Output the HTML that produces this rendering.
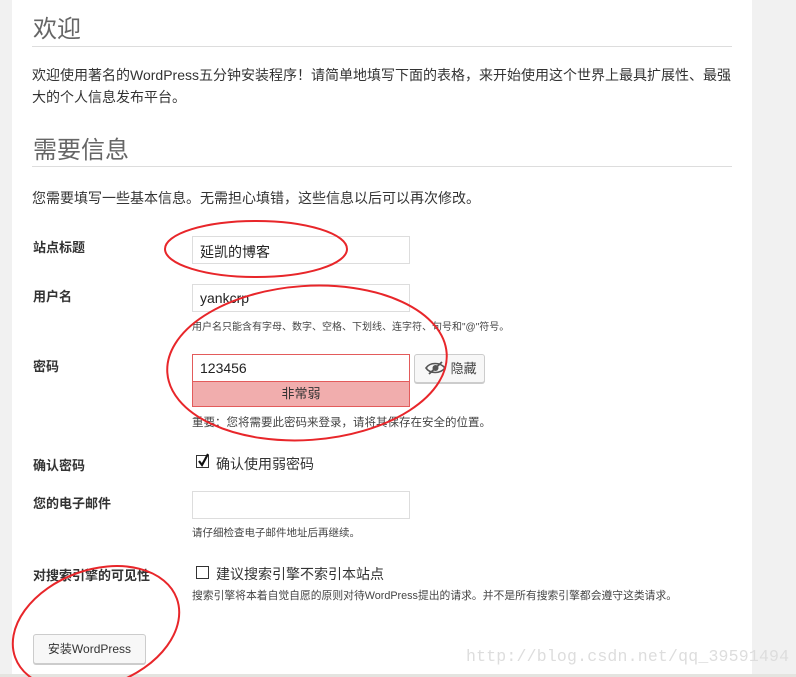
<!DOCTYPE html>
<html><head><meta charset="utf-8"><style>
*{margin:0;padding:0;box-sizing:border-box}
html,body{width:796px;height:677px;overflow:hidden}
body{background:#f1f1f1;position:relative;font-family:"Liberation Sans","Noto Sans CJK SC",sans-serif;color:#444;font-size:13px}
.panel{position:absolute;left:12px;top:0;width:740px;height:674px;background:#fff}
.bot{position:absolute;left:0;top:674px;width:796px;height:3px;background:#e4e4e0}
.a{position:absolute;white-space:nowrap}
h1{position:absolute;left:33px;font-weight:normal;font-size:24px;color:#666}
.hr{position:absolute;left:32px;width:700px;height:1px;background:#ddd}
.lab{position:absolute;left:33px;font-weight:bold;font-size:13px;color:#333}
.inp{position:absolute;left:192px;width:218px;height:28px;border:1px solid #ddd;background:#fff;font-size:14px;color:#222;padding:5px 7px}
.small{position:absolute;left:192px;font-size:11px;color:#444}
.cb{position:absolute;width:13px;height:13px;border:1px solid #333;background:#fff}
</style></head><body>
<div class="panel"></div>
<div class="bot"></div>
<h1 style="top:9px">欢迎</h1>
<div class="hr" style="top:46px"></div>
<div class="a" style="left:32px;top:64px;font-size:14px;line-height:22px;color:#333">欢迎使用著名的WordPress五分钟安装程序！请简单地填写下面的表格，来开始使用这个世界上最具扩展性、最强<br>大的个人信息发布平台。</div>
<h1 style="top:130px">需要信息</h1>
<div class="hr" style="top:166px"></div>
<div class="a" style="left:32px;top:188px;font-size:14px;color:#333">您需要填写一些基本信息。无需担心填错，这些信息以后可以再次修改。</div>

<div class="lab" style="top:237px">站点标题</div>
<div class="inp" style="top:236px">延凯的博客</div>
<div class="lab" style="top:286px">用户名</div>
<div class="inp" style="top:284px">yankcrp</div>
<div class="small" style="top:318px;font-size:10px">用户名只能含有字母、数字、空格、下划线、连字符、句号和"@"符号。</div>
<div class="lab" style="top:356px">密码</div>
<div class="inp" style="top:354px;border-color:#e35b5b;height:28px">123456</div>
<div class="a" style="left:192px;top:381px;width:218px;height:26px;background:#f1adad;border:1px solid #e35b5b;text-align:center;line-height:24px;font-size:13px;color:#333">非常弱</div>
<div class="a" style="left:414px;top:354px;width:71px;height:29px;background:#f7f7f7;border:1px solid #ccc;border-radius:3px;box-shadow:0 1px 0 #ccc;font-size:13px;line-height:27px;padding-left:10px">
<svg width="22" height="14" viewBox="0 0 22 14" style="vertical-align:-2px"><path d="M1 7C5 1 15 1 20 7C15 13 5 13 1 7Z" fill="none" stroke="#555" stroke-width="1.6"/><circle cx="10.5" cy="7" r="3" fill="#555"/><path d="M4 13L17 1" stroke="#555" stroke-width="1.8"/></svg> 隐藏</div>
<div class="small" style="top:414px;font-size:11.5px">重要：您将需要此密码来登录，请将其保存在安全的位置。</div>

<div class="lab" style="top:455px">确认密码</div>
<div class="cb" style="left:196px;top:455px"></div>
<svg class="a" style="left:196px;top:453px" width="14" height="15"><path d="M3 8L6 12L12 1" fill="none" stroke="#111" stroke-width="2.2"/></svg>
<div class="a" style="left:216px;top:454px;font-size:14px;color:#333">确认使用弱密码</div>
<div class="lab" style="top:493px">您的电子邮件</div>
<div class="inp" style="top:491px"></div>
<div class="small" style="top:525px;font-size:10.5px">请仔细检查电子邮件地址后再继续。</div>
<div class="lab" style="top:565px">对搜索引擎的可见性</div>
<div class="cb" style="left:196px;top:566px"></div>
<div class="a" style="left:216px;top:564px;font-size:14px;color:#333">建议搜索引擎不索引本站点</div>
<div class="small" style="top:587px;font-size:10.8px">搜索引擎将本着自觉自愿的原则对待WordPress提出的请求。并不是所有搜索引擎都会遵守这类请求。</div>
<div class="a" style="left:33px;top:634px;width:113px;height:30px;background:#f7f7f7;border:1px solid #ccc;border-radius:3px;box-shadow:0 1px 0 #ccc;text-align:center;line-height:28px;font-size:12px;color:#333">安装WordPress</div>
<div class="a" style="left:466px;top:647px;font-family:'Liberation Mono',monospace;font-size:16.5px;letter-spacing:0.2px;color:#ddd">http://blog.csdn.net/qq_39591494</div>

<svg class="a" style="left:0;top:0" width="796" height="677">
<g fill="none" stroke="#e8262a" stroke-width="2">
<ellipse cx="256" cy="249" rx="91" ry="28"/>
<ellipse cx="307" cy="363" rx="140" ry="77" transform="rotate(-4 307 363)"/>
<ellipse cx="96" cy="628" rx="86" ry="58" transform="rotate(-20 96 628)"/>
</g></svg>
</body></html>
